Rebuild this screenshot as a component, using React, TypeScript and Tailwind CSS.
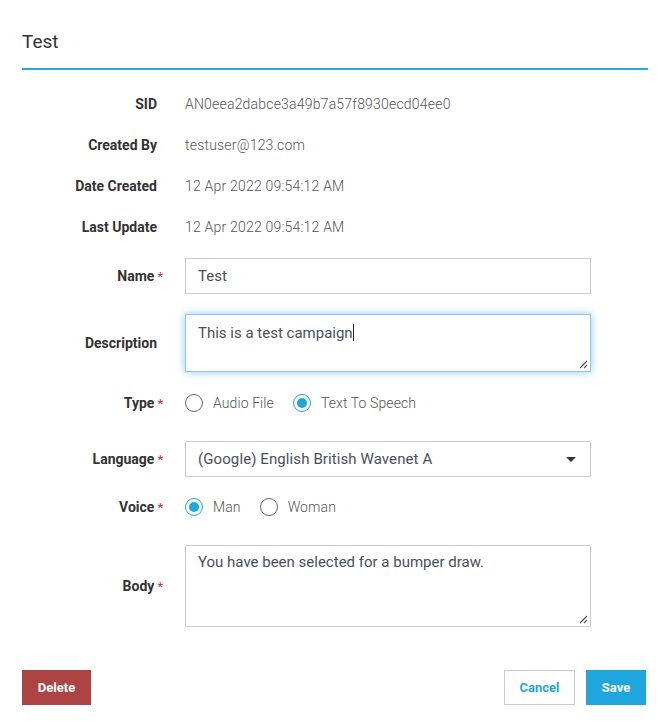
import React from "react";

const font = { fontFamily: "Roboto, 'Liberation Sans', sans-serif" };

const info = [
  { label: "SID", value: "AN0eea2dabce3a49b7a57f8930ecd04ee0" },
  { label: "Created By", value: "testuser@123.com" },
  { label: "Date Created", value: "12 Apr 2022 09:54:12 AM" },
  { label: "Last Update", value: "12 Apr 2022 09:54:12 AM" },
];

function Label({ text, required }: { text: string; required?: boolean }) {
  return (
    <div className={`w-[141px] shrink-0 text-right text-[14px] font-bold text-[#333] ${required ? "" : "pr-[6px]"}`}>
      {text}
      {required && <span className="ml-[3px] text-[13px] font-normal text-[#c0392b]">*</span>}
    </div>
  );
}

function Grip() {
  return (
    <svg className="absolute right-[2px] bottom-[2px]" width="10" height="10" viewBox="0 0 10 10">
      <path d="M9 2L2 9M9 6L6 9" stroke="#555" strokeWidth="1.2" fill="none" />
    </svg>
  );
}

function Radio({ label, checked }: { label: string; checked?: boolean }) {
  return (
    <label className="flex items-center gap-[10px]">
      <span
        className={`flex h-[18px] w-[18px] items-center justify-center rounded-full border ${
          checked ? "border-[#1fa6dc]" : "border-[#666]"
        }`}
      >
        {checked && <span className="h-[10px] w-[10px] rounded-full bg-[#1fa6dc]" />}
      </span>
      <span className="text-[14px] font-light tracking-[0.1px] text-[#555]">{label}</span>
    </label>
  );
}

export default function App() {
  return (
    <div className="min-h-[722px] w-[670px] bg-white px-[22px]" style={font}>
      <div className="pt-[30px] pb-[14px]">
        <h1 className="text-[19px] leading-[24px] font-normal text-[#333]">Test</h1>
      </div>
      <div className="h-[2px] w-full bg-[#29a8dc]" />

      <div className="pt-[14px]">
        {info.map((r) => (
          <div key={r.label} className="flex h-[41px] items-center">
            <Label text={r.label} />
            <div className="ml-[22px] text-[14px] font-light tracking-[0.2px] text-[#555]">{r.value}</div>
          </div>
        ))}

        <div className="mt-[10px] flex items-center">
          <Label text="Name" required />
          <div className="ml-[22px] flex h-[36px] w-[406px] items-center border border-[#ccc] px-[12px] text-[15px] text-[#4a505b]">
            Test
          </div>
        </div>

        <div className="mt-[20px] flex items-center">
          <Label text="Description" />
          <div className="relative ml-[22px] h-[58px] w-[406px] border border-[#8cc8ec] px-[12px] pt-[6px] text-[15px] leading-[20px] text-[#4a505b] shadow-[0_0_8px_rgba(102,175,233,0.7)]">
            This is a test campaign
            <span className="inline-block h-[17px] w-px translate-y-[3px] bg-[#222]" />
            <Grip />
          </div>
        </div>

        <div className="mt-[13px] flex h-[36px] items-center">
          <Label text="Type" required />
          <div className="ml-[22px] flex items-center gap-[19px]">
            <Radio label="Audio File" />
            <Radio label="Text To Speech" checked />
          </div>
        </div>

        <div className="mt-[20px] flex items-center">
          <Label text="Language" required />
          <div className="ml-[22px] flex h-[36px] w-[406px] items-center justify-between border border-[#ccc] pl-[12px] pr-[14px] text-[15px] tracking-[0.1px] text-[#4a505b]">
            <span>(Google) English British Wavenet A</span>
            <svg width="10" height="5" viewBox="0 0 10 5">
              <path d="M0 0h10L5 5z" fill="#333" />
            </svg>
          </div>
        </div>

        <div className="mt-[12px] flex h-[36px] items-center">
          <Label text="Voice" required />
          <div className="ml-[22px] flex items-center gap-[19px]">
            <Radio label="Man" checked />
            <Radio label="Woman" />
          </div>
        </div>

        <div className="mt-[20px] flex items-center">
          <Label text="Body" required />
          <div className="relative ml-[22px] h-[82px] w-[406px] border border-[#ccc] px-[12px] pt-[6px] text-[15px] leading-[20px] text-[#4a505b]">
            You have been selected for a bumper draw.
            <Grip />
          </div>
        </div>

        <div className="mt-[43px] flex items-center justify-between pr-[2px]">
          <button className="h-[35px] w-[69px] bg-[#ab4442] text-[13px] font-bold text-white">Delete</button>
          <div className="flex gap-[11px]">
            <button className="h-[35px] w-[71px] border border-[#ccc] bg-white text-[13px] font-bold text-[#1fa6dc]">
              Cancel
            </button>
            <button className="h-[35px] w-[60px] bg-[#1fa6dc] text-[13px] font-bold text-white">Save</button>
          </div>
        </div>
      </div>
    </div>
  );
}
